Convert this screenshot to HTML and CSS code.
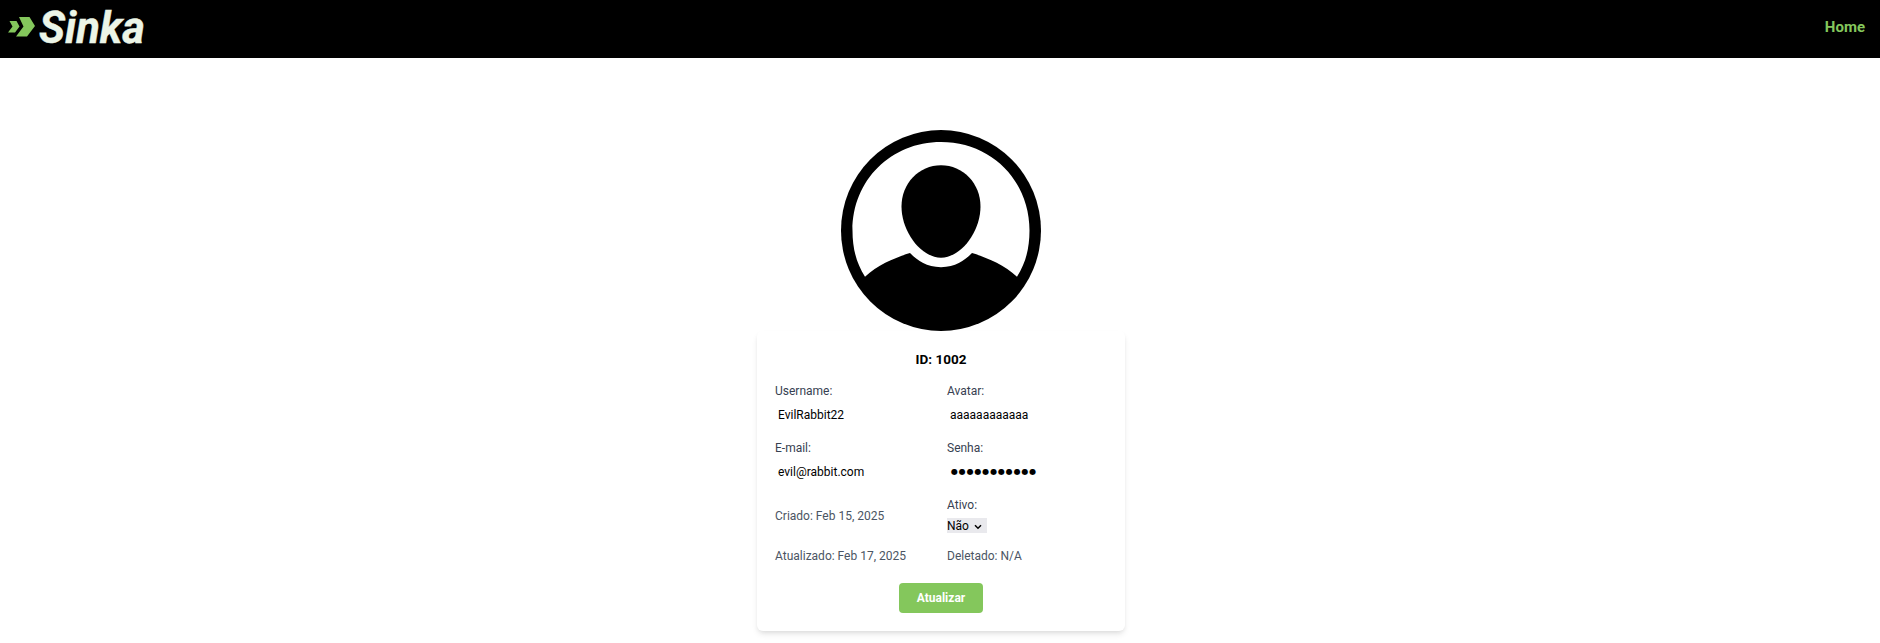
FILE: index.html
```html
<!DOCTYPE html>
<html lang="pt-BR">
<head>
<meta charset="utf-8">
<title>Sinka</title>
<link rel="stylesheet" href="styles.css">
</head>
<body>
<header class="navbar">
  <a class="brand">
    <svg class="brand-mark" width="28" height="22" viewBox="0 0 28 22" aria-hidden="true">
      <path d="M1.500 5H8.500L11.500 10.500L7 16.500H0L4.500 10.500Z"/>
      <path d="M11 1H21.500L27 10L19 20.500H8L15.500 10.500Z"/>
    </svg>
    <span class="brand-name">Sinka</span>
  </a>
  <a class="nav-link">Home</a>
</header>
<main class="profile">
  <svg class="avatar" width="200" height="201" viewBox="0 0 200 200" preserveAspectRatio="none" aria-hidden="true">
    <circle cx="100" cy="100" r="100"/>
    <path class="avatar-cut" d="M24 146C15 132 11.500 117 11.500 100C11.500 50 50 12 100 12S188.500 50 188.500 100C188.500 117 185 132 176 146C163 134 146 127 131 122.500C124 129 115 136.500 100 136.500S76 129 69 122.500C54 127 37 134 24 146Z"/>
    <path d="M100 35C122 35 139.500 53 139.500 76C139.500 101 120 127 100 127S60.500 101 60.500 76C60.500 53 78 35 100 35Z"/>
  </svg>
  <form class="card">
    <h1 class="card-title">ID: 1002</h1>
    <div class="fields">
      <div class="field"><span class="label">Username:</span><div class="value">EvilRabbit22</div></div>
      <div class="field"><span class="label">Avatar:</span><div class="value">aaaaaaaaaaaa</div></div>
      <div class="field"><span class="label">E-mail:</span><div class="value">evil@rabbit.com</div></div>
      <div class="field"><span class="label">Senha:</span><div class="value masked">●●●●●●●●●●●</div></div>
      <p class="note">Criado: Feb 15, 2025</p>
      <div class="field"><span class="label">Ativo:</span>
        <div class="select">Não<svg width="8" height="6" viewBox="0 0 8 6" aria-hidden="true"><path d="M1 1.200L4 4.200L7 1.200"/></svg></div>
      </div>
      <p class="note last">Atualizado: Feb 17, 2025</p>
      <p class="note last">Deletado: N/A</p>
    </div>
    <button class="submit" type="button">Atualizar</button>
  </form>
</main>
</body>
</html>
```
FILE: styles.css
```css
* { box-sizing: border-box; }
body {
  margin: 0;
  min-height: 100vh;
  background: #fff;
  color: #000;
  font: 12px/18px Roboto, sans-serif;
}
.navbar {
  height: 58px;
  padding: 0 15px 0 8px;
  background: #000;
  display: flex;
  justify-content: space-between;
  align-items: center;
}
.brand { display: flex; align-items: center; gap: 3px; }
.brand-mark { fill: #84c75c; margin-bottom: 4px; }
.brand-name {
  color: #ecf5e7;
  font: italic 700 43.5px/54px Roboto, sans-serif;
  -webkit-text-stroke: .4px #ecf5e7;
  margin-bottom: 1px;
}
.nav-link {
  color: #84c75c;
  font-size: 15px;
  font-weight: 700;
  margin-bottom: 4px;
}
.profile {
  padding-top: 72px;
  display: flex;
  flex-direction: column;
  align-items: center;
}
.avatar { display: block; margin-left: 1px; }
.avatar-cut { fill: #fff; }
.card {
  width: 368px;
  height: 300px;
  margin-left: 2px;
  padding: 18px;
  border-radius: 6px;
  box-shadow: 0 4px 6px -1px rgba(0, 0, 0, .1), 0 2px 4px -1px rgba(0, 0, 0, .06);
  display: flex;
  flex-direction: column;
  align-items: center;
}
.card-title {
  margin: 0 0 13px;
  font-size: 13.5px;
  line-height: 20px;
  font-weight: 700;
}
.fields {
  width: 100%;
  display: grid;
  grid-template-columns: 1fr 1fr;
  grid-template-rows: 45px 45px 40px 17px;
  gap: 12px;
}
.field { display: flex; flex-direction: column; gap: 4px; }
.label { color: #374151; }
.value {
  height: 22px;
  padding: 0 3px;
  line-height: 22px;
}
.masked {
  padding-left: 4px;
  font-family: "DejaVu Sans", sans-serif;
  font-size: 8px;
  letter-spacing: .85px;
}
.note { margin: 0; align-self: center; color: #4b5563; }
.note.last { align-self: start; line-height: 16px; }
.select {
  width: 40px;
  height: 15px;
  line-height: 16px;
  background: #e9e9ed;
  display: flex;
  align-items: flex-start;
  gap: 5px;
}
.select svg { fill: none; stroke: #000; stroke-width: 1.5; margin-top: 6px; }
.submit {
  width: 84px;
  height: 30px;
  margin-top: 18px;
  padding: 0;
  border: 0;
  border-radius: 4px;
  background: #84c75c;
  color: #fff;
  font: 700 12px/30px Roboto, sans-serif;
}
```
